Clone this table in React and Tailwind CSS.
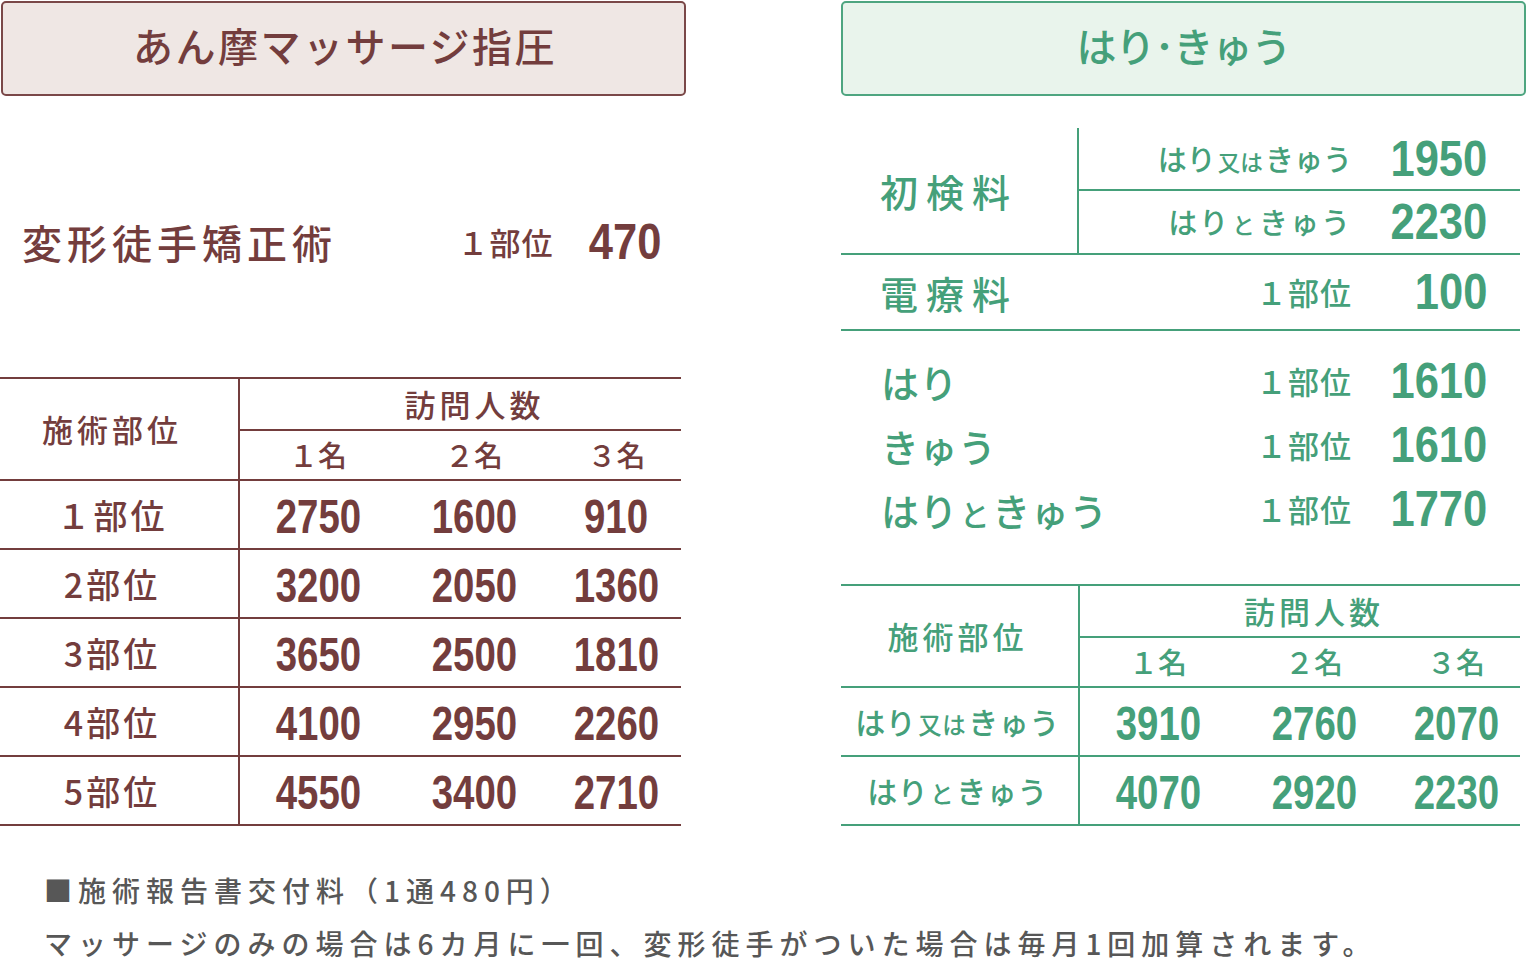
import React from "react";

const brown = {
  text: "text-[#733d3d]",
  line: "border-[#733d3d]",
};
const green = {
  text: "text-[#45a07a]",
  line: "border-[#45a07a]",
};

const jp = "font-['Noto_Sans_CJK_JP',sans-serif] font-medium";
const num = "font-['Liberation_Sans_Narrow','Liberation_Sans',sans-serif] font-bold";

function Small({ children }) {
  return <span className="text-[0.78em] mx-[2px]">{children}</span>;
}

function VisitTable({ t, width, col1, col1Pad, labelSize, rows }) {
  return (
    <div className={`${width} border-t-2 ${t.line} ${t.text}`}>
      <div className={`flex border-b-2 ${t.line}`}>
        <div className={`${col1} ${col1Pad} flex items-center justify-center border-r-2 ${t.line}`}>
          <span className={`${jp} text-[31px] tracking-[4px]`}>施術部位</span>
        </div>
        <div className="flex-1">
          <div className={`h-[52px] pl-[28px] flex items-center justify-center border-b-2 ${t.line}`}>
            <span className={`${jp} text-[31px] tracking-[4px]`}>訪問人数</span>
          </div>
          <div className={`${jp} h-[48px] grid grid-cols-[156px_156px_1fr] items-center text-center text-[29px]`}>
            <span>１名</span>
            <span>２名</span>
            <span>３名</span>
          </div>
        </div>
      </div>
      {rows.map((r, i) => (
        <div key={i} className={`flex h-[69px] border-b-2 ${t.line}`}>
          <div className={`${col1} ${col1Pad} flex items-center justify-center border-r-2 ${t.line}`}>
            <span className={`${jp} ${labelSize} whitespace-nowrap`}>{r.label}</span>
          </div>
          <div className={`${num} flex-1 grid grid-cols-[156px_156px_1fr] items-center text-center text-[48px]`}>
            {r.values.map((v) => (
              <span key={v}>
                <span className="inline-block scale-x-[0.8]">{v}</span>
              </span>
            ))}
          </div>
        </div>
      ))}
    </div>
  );
}

function PriceLine({ label, value, labelClass }) {
  return (
    <div className="flex items-center justify-end pr-[33px]">
      <span className={`${jp} ${labelClass} whitespace-nowrap`}>{label}</span>
      <span className={`${num} w-[135px] text-right text-[50px] leading-none`}>
        <span className="inline-block origin-right scale-x-[0.87]">{value}</span>
      </span>
    </div>
  );
}

export default function App() {
  return (
    <div className="w-[1526px] h-[959px] overflow-hidden bg-white">
      <div className="flex">
        {/* あん摩マッサージ指圧 */}
        <div className={`w-[686px] shrink-0 ${brown.text}`}>
          <div className="ml-px mt-px h-[95px] w-[685px] pb-[8px] rounded-[5px] border-2 border-[#7a4848] bg-[#efe7e4] flex items-center justify-center">
            <span className={`${jp} text-[40px] tracking-[2.5px] pl-[3px]`}>あん摩マッサージ指圧</span>
          </div>
          <div className="h-[281px] pt-[116px]">
            <div className="flex h-[60px] items-center pl-[22px] pr-[25px]">
              <span className={`${jp} text-[40px] tracking-[5px]`}>変形徒手矯正術</span>
              <span className={`${jp} ml-auto text-[31px] tracking-[1px]`}>１部位</span>
              <span className={`${num} ml-[24px] text-[50px] leading-none`}>
                <span className="inline-block origin-right scale-x-[0.87]">470</span>
              </span>
            </div>
          </div>
          <VisitTable
            t={brown}
            width="w-[681px]"
            col1="w-[240px]"
            col1Pad="pr-[14px]"
            labelSize="text-[34px] tracking-[3px]"
            rows={[
              { label: "１部位", values: ["2750", "1600", "910"] },
              { label: "2部位", values: ["3200", "2050", "1360"] },
              { label: "3部位", values: ["3650", "2500", "1810"] },
              { label: "4部位", values: ["4100", "2950", "2260"] },
              { label: "5部位", values: ["4550", "3400", "2710"] },
            ]}
          />
        </div>

        {/* はり・きゅう */}
        <div className={`ml-[155px] w-[685px] shrink-0 ${green.text}`}>
          <div className="mt-px h-[95px] w-[685px] pb-[8px] rounded-[5px] border-2 border-[#4ea580] bg-[#e9f4ec] flex items-center justify-center">
            <span className={`${jp} text-[40px] tracking-[-1px] whitespace-nowrap`}>はり･きゅう</span>
          </div>

          <div className="mt-[32px] w-[679px]">
            <div className={`flex h-[127px] border-b-2 ${green.line}`}>
              <div className={`w-[238px] flex items-center pl-[39px] border-r-2 ${green.line}`}>
                <span className={`${jp} text-[38px] tracking-[8px]`}>初検料</span>
              </div>
              <div className="flex-1 flex flex-col">
                <div className={`h-[63px] flex flex-col justify-center border-b-2 ${green.line}`}>
                  <PriceLine
                    label={<>はり<Small>又は</Small>きゅう</>}
                    value="1950"
                    labelClass="text-[29px]"
                  />
                </div>
                <div className="flex-1 flex flex-col justify-center">
                  <PriceLine
                    label={<>はり<Small>と</Small>きゅう</>}
                    value="2230"
                    labelClass="text-[29px] tracking-[2px]"
                  />
                </div>
              </div>
            </div>

            <div className={`flex h-[76px] items-center border-b-2 ${green.line}`}>
              <span className={`${jp} pl-[39px] text-[38px] tracking-[8px]`}>電療料</span>
              <div className="ml-auto">
                <PriceLine label="１部位" value="100" labelClass="text-[31px] tracking-[1px]" />
              </div>
            </div>

            <div className="pt-[18px]">
              {[
                { label: <>はり</>, value: "1610" },
                { label: <>きゅう</>, value: "1610" },
                { label: <>はり<Small>と</Small>きゅう</>, value: "1770" },
              ].map((r, i) => (
                <div key={i} className="flex h-[64px] items-center">
                  <span className={`${jp} pl-[40px] text-[38px] tracking-[0.5px]`}>{r.label}</span>
                  <div className="ml-auto">
                    <PriceLine label="１部位" value={r.value} labelClass="text-[31px] tracking-[1px]" />
                  </div>
                </div>
              ))}
            </div>

            <div className="mt-[43px]">
              <VisitTable
                t={green}
                width="w-[679px]"
                col1="w-[239px]"
                col1Pad="pr-[4px]"
                labelSize="text-[30px] tracking-[0.5px]"
                rows={[
                  { label: <>はり<Small>又は</Small>きゅう</>, values: ["3910", "2760", "2070"] },
                  { label: <>はり<Small>と</Small>きゅう</>, values: ["4070", "2920", "2230"] },
                ]}
              />
            </div>
          </div>
        </div>
      </div>

      <div className={`${jp} mt-[49px] pl-[44px] text-[28px] leading-[30px] tracking-[6px] text-[#575757] whitespace-nowrap`}>
        <p>■施術報告書交付料（1通480円）</p>
        <p className="mt-[23px]">マッサージのみの場合は6カ月に一回、変形徒手がついた場合は毎月1回加算されます。</p>
      </div>
    </div>
  );
}
